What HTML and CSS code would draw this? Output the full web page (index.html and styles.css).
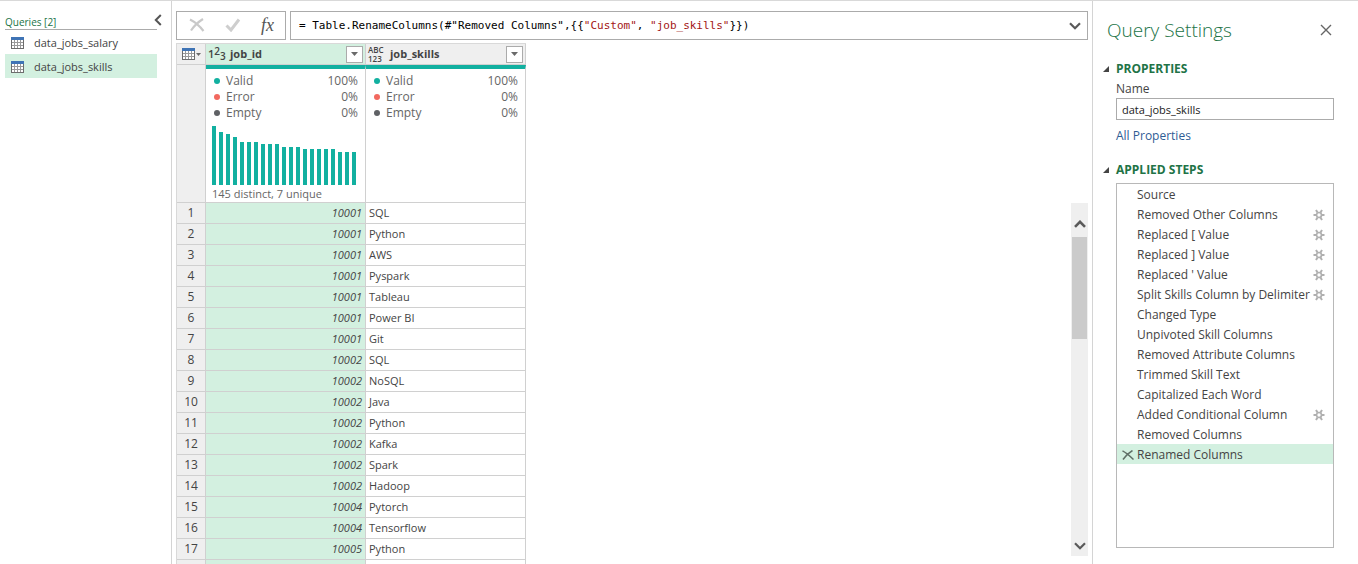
FILE: index.html
```html
<!DOCTYPE html>
<html lang="en">
<head>
<meta charset="utf-8">
<title>Power Query Editor</title>
<link rel="stylesheet" href="styles.css">
</head>
<body>
<svg class="defs" aria-hidden="true">
  <symbol id="table" viewBox="0 0 13 12">
    <rect x="0.5" y="0.5" width="12" height="11" fill="#fff" stroke="#6d6d6d"/>
    <path d="M3.5 3v8M6.5 3v8M9.5 3v8M1 5.5h11M1 8.5h11" stroke="#9a9a9a" fill="none"/>
    <rect width="13" height="3" fill="#3f74b5"/>
  </symbol>
  <symbol id="gear" viewBox="0 0 12 12">
    <g fill="none" stroke="#b0b0b0"><circle cx="6" cy="6" r="2.5" stroke-width="1.7"/>
    <path d="M0.500 6h2.500M9 6h2.500M3 1l1.500 2.500M9 1L7.500 3.500M3 11l1.500-2.500M9 11L7.500 8.500" stroke-width="2"/></g>
  </symbol>
  <symbol id="down" viewBox="0 0 12 8"><path d="M1 1.2l5 5 5-5" fill="none" stroke="#5a5a5a" stroke-width="2.2"/></symbol>
  <symbol id="up" viewBox="0 0 12 8"><path d="M1 6.8l5-5 5 5" fill="none" stroke="#5a5a5a" stroke-width="2.6"/></symbol>
  <symbol id="caret" viewBox="0 0 7 4"><path d="M0 0h7L3.5 4z" fill="#6a6a6a"/></symbol>
  <symbol id="fold" viewBox="0 0 6 6"><path d="M6 0v6H0z" fill="#444"/></symbol>
</svg>
<div class="app">
  <nav class="queries">
    <button class="collapse" aria-label="Collapse queries"><svg width="8" height="12" viewBox="0 0 8 12"><path d="M6.8 1L1.8 6l5 5" fill="none" stroke="#555" stroke-width="2"/></svg></button>
    <h2 class="queries-title">Queries [2]</h2>
    <ul class="query-list">
      <li><button class="query"><svg width="13" height="12"><use href="#table"/></svg>data_jobs_salary</button></li>
      <li><button class="query selected"><svg width="13" height="12"><use href="#table"/></svg>data_jobs_skills</button></li>
    </ul>
  </nav>

  <main class="editor">
    <div class="formula-bar">
      <div class="formula-actions">
        <button aria-label="Cancel"><svg width="16" height="14" viewBox="0 0 16 14"><path d="M1 1.5C5 3.500 11 8.500 14.500 13M14 1C10 3.500 5 8 2 12.500" fill="none" stroke="#c9c9c9" stroke-width="2.2"/></svg></button>
        <button aria-label="Commit"><svg width="16" height="14" viewBox="0 0 16 14"><path d="M1.500 7.500l4.500 4.500L14 1.500" fill="none" stroke="#cecece" stroke-width="3"/></svg></button>
        <button class="fx" aria-label="Insert step">fx</button>
      </div>
      <div class="formula">
        <code>= Table.RenameColumns(#"Removed Columns",{{<span class="str">"Custom"</span>, <span class="str">"job_skills"</span>}})</code>
        <button aria-label="Expand formula bar"><svg width="12" height="8"><use href="#down"/></svg></button>
      </div>
    </div>
    <div class="data">
      <table class="grid">
        <colgroup><col class="c-num"><col class="c-col"><col class="c-col"></colgroup>
        <thead>
          <tr class="names">
            <th><button class="corner" aria-label="Table menu"><svg width="13" height="12"><use href="#table"/></svg><svg width="5" height="3" viewBox="0 0 7 4"><use href="#caret"/></svg></button></th>
            <th class="active"><div class="head"><span class="type-int">1<sup>2</sup><sub>3</sub></span><span class="name">job_id</span><button class="filter" aria-label="Filter job_id"><svg width="7" height="4"><use href="#caret"/></svg></button></div></th>
            <th><div class="head"><span class="type-any"><span>ABC</span><span>123</span></span><span class="name">job_skills</span><button class="filter" aria-label="Filter job_skills"><svg width="7" height="4"><use href="#caret"/></svg></button></div></th>
          </tr>
          <tr class="profiles">
            <td class="blank"></td>
            <td class="profile">
              <ul class="quality"><li class="valid">Valid<span>100%</span></li><li class="error">Error<span>0%</span></li><li class="empty">Empty<span>0%</span></li></ul>
              <div class="bars">
                <i style="height:59px"></i><i style="height:53px"></i><i style="height:51px"></i><i style="height:48px"></i><i style="height:43px"></i><i style="height:43px"></i><i style="height:43px"></i><i style="height:41px"></i><i style="height:41px"></i><i style="height:41px"></i><i style="height:38px"></i><i style="height:38px"></i><i style="height:38px"></i><i style="height:36px"></i><i style="height:36px"></i><i style="height:36px"></i><i style="height:36px"></i><i style="height:36px"></i><i style="height:33px"></i><i style="height:33px"></i><i style="height:33px"></i>
              </div>
              <p class="distinct">145 distinct, 7 unique</p>
            </td>
            <td class="profile">
              <ul class="quality"><li class="valid">Valid<span>100%</span></li><li class="error">Error<span>0%</span></li><li class="empty">Empty<span>0%</span></li></ul>
            </td>
          </tr>
        </thead>
        <tbody>
          <tr><th>1</th><td class="id">10001</td><td>SQL</td></tr>
          <tr><th>2</th><td class="id">10001</td><td>Python</td></tr>
          <tr><th>3</th><td class="id">10001</td><td>AWS</td></tr>
          <tr><th>4</th><td class="id">10001</td><td>Pyspark</td></tr>
          <tr><th>5</th><td class="id">10001</td><td>Tableau</td></tr>
          <tr><th>6</th><td class="id">10001</td><td>Power BI</td></tr>
          <tr><th>7</th><td class="id">10001</td><td>Git</td></tr>
          <tr><th>8</th><td class="id">10002</td><td>SQL</td></tr>
          <tr><th>9</th><td class="id">10002</td><td>NoSQL</td></tr>
          <tr><th>10</th><td class="id">10002</td><td>Java</td></tr>
          <tr><th>11</th><td class="id">10002</td><td>Python</td></tr>
          <tr><th>12</th><td class="id">10002</td><td>Kafka</td></tr>
          <tr><th>13</th><td class="id">10002</td><td>Spark</td></tr>
          <tr><th>14</th><td class="id">10002</td><td>Hadoop</td></tr>
          <tr><th>15</th><td class="id">10004</td><td>Pytorch</td></tr>
          <tr><th>16</th><td class="id">10004</td><td>Tensorflow</td></tr>
          <tr><th>17</th><td class="id">10005</td><td>Python</td></tr>
          <tr><th></th><td class="id"></td><td></td></tr>
        </tbody>
      </table>
      <div class="scrollbar">
        <button aria-label="Scroll up"><svg width="12" height="8"><use href="#up"/></svg></button>
        <div class="track"><div class="thumb"></div></div>
        <button aria-label="Scroll down"><svg width="12" height="8"><use href="#down"/></svg></button>
      </div>
    </div>
  </main>

  <aside class="settings">
    <header class="settings-head">
      <h1>Query Settings</h1>
      <button aria-label="Close"><svg width="12" height="12" viewBox="0 0 12 12"><path d="M1 1l10 10M11 1L1 11" fill="none" stroke="#666" stroke-width="1.4"/></svg></button>
    </header>
    <h2 class="section"><svg width="6" height="6"><use href="#fold"/></svg>PROPERTIES</h2>
    <div class="properties">
      <label for="name">Name</label>
      <input id="name" type="text" value="data_jobs_skills">
      <a href="#">All Properties</a>
    </div>
    <h2 class="section"><svg width="6" height="6"><use href="#fold"/></svg>APPLIED STEPS</h2>
    <ol class="steps">
      <li>Source</li>
      <li>Removed Other Columns<button aria-label="Edit step"><svg width="12" height="12"><use href="#gear"/></svg></button></li>
      <li>Replaced [ Value<button aria-label="Edit step"><svg width="12" height="12"><use href="#gear"/></svg></button></li>
      <li>Replaced ] Value<button aria-label="Edit step"><svg width="12" height="12"><use href="#gear"/></svg></button></li>
      <li>Replaced ' Value<button aria-label="Edit step"><svg width="12" height="12"><use href="#gear"/></svg></button></li>
      <li>Split Skills Column by Delimiter<button aria-label="Edit step"><svg width="12" height="12"><use href="#gear"/></svg></button></li>
      <li>Changed Type</li>
      <li>Unpivoted Skill Columns</li>
      <li>Removed Attribute Columns</li>
      <li>Trimmed Skill Text</li>
      <li>Capitalized Each Word</li>
      <li>Added Conditional Column<button aria-label="Edit step"><svg width="12" height="12"><use href="#gear"/></svg></button></li>
      <li>Removed Columns</li>
      <li class="current"><button class="delete" aria-label="Delete step"><svg width="12" height="10" viewBox="0 0 12 10"><path d="M.5 .8C4 2.500 8 6 11.500 9.500M10.500 .5C7 2.500 3.500 6 1 9.500" fill="none" stroke="#5f6f66" stroke-width="1.500"/></svg></button>Renamed Columns</li>
    </ol>
  </aside>
</div>
</body>
</html>
```
FILE: styles.css
```css
* { box-sizing: border-box; }
body { margin: 0; background: #fff; color: #444; font: 12px/16px "Open Sans", "Noto Sans", sans-serif; }
h1, h2, ul, ol, p { margin: 0; padding: 0; font-weight: 400; list-style: none; }
button { display: flex; align-items: center; justify-content: center; margin: 0; padding: 0; border: 0; background: none; color: inherit; font: inherit; }
svg { display: block; flex: none; }
.defs { position: absolute; width: 0; height: 0; }

.app { display: grid; grid-template-columns: 172px 1fr 266px; height: 100vh; overflow: hidden; border-top: 1px solid #d9d9d9; }

.queries { position: relative; padding: 12px 14px 0 5px; border-right: 1px solid #d4d4d4; }
.collapse { position: absolute; top: 13px; right: 9px; }
.queries-title { height: 17px; border-bottom: 1px solid #ababab; color: #217346; font-size: 10px; font-weight: 400; line-height: 18px; }
.query { justify-content: flex-start; gap: 10px; width: 100%; height: 24px; padding: 1px 0 0 6px; font-size: 11px; }
.selected { background: #d3f0e0; }

.editor { display: flex; flex-direction: column; gap: 3px; min-width: 0; min-height: 0; padding: 10px 4px 0; }
.formula-bar { display: flex; flex: none; gap: 4px; height: 29px; }
.formula-actions, .formula { display: flex; align-items: center; border: 1px solid #ababab; }
.formula-actions { justify-content: space-between; width: 110px; padding: 0 11px 2px 12px; }
.fx { color: #555; font: italic 18px/20px "Liberation Serif", serif; }
.formula { flex: 1; justify-content: space-between; padding: 0 6px 0 8px; }
.formula code { color: #000; font: 11px/16px "DejaVu Sans Mono", monospace; white-space: pre; }
.formula .str { color: #a31515; }

.data { display: flex; flex: 1; align-items: flex-start; justify-content: space-between; min-height: 0; overflow: hidden; }
.grid { width: 350px; table-layout: fixed; border-collapse: separate; border-spacing: 0; border-top: 1px solid #d9d9d9; border-left: 1px solid #d9d9d9; }
.c-num { width: 29px; }
.c-col { width: 160px; }
.grid th, .grid td { height: 21px; padding: 0 3px; border-right: 1px solid #d0d0d0; border-bottom: 1px solid #d0d0d0; text-align: left; font-size: 11px; line-height: 16px; white-space: nowrap; }
.grid th { padding: 0; background: #efefef; font-weight: 400; }
.grid tbody th { font-size: 12px; text-align: center; }
.grid .id { background: #d3f0e0; font-style: italic; text-align: right; }
.corner { gap: 1px; width: 100%; height: 20px; }
.names .active { background: #d3f0e0; }
.head { display: flex; align-items: center; height: 20px; padding: 0 2px; }
.name { flex: 1; font-weight: 700; }
.type-int { width: 22px; font-size: 11px; font-weight: 600; }
.type-int sup, .type-int sub { font-size: 10px; line-height: 0; }
.type-int sup { vertical-align: 3px; }
.type-int sub { vertical-align: -2px; }
.type-any { display: flex; flex-direction: column; width: 22px; font-size: 8px; font-weight: 600; line-height: 9px; }
.filter { width: 17px; height: 17px; border: 1px solid #ababab; background: #fff; }
.grid .blank { background: #efefef; }
.grid .profile { height: 138px; padding: 4px 7px 0 6px; border-top: 4px solid #12b0a0; vertical-align: top; color: #666; }
.quality { font-size: 12px; }
.quality li { display: flex; align-items: center; gap: 6px; height: 16px; padding-left: 2px; }
.quality li::before { content: ""; width: 6px; height: 6px; border-radius: 50%; background: #12b0a0; }
.quality .error::before { background: #f2695f; }
.quality .empty::before { background: #5f6165; }
.quality span { margin-left: auto; }
.bars { display: flex; align-items: flex-end; gap: 3px; height: 64px; }
.bars i { flex: none; width: 4px; background: #12b0a0; }
.distinct { line-height: 17px; }

.scrollbar { display: flex; flex-direction: column; align-self: stretch; width: 17px; margin: 160px 0 8px; background: #efefef; }
.scrollbar button { height: 34px; padding-top: 8px; }
.scrollbar button:last-child { height: 20px; padding: 0; }
.track { flex: 1; padding: 0 1px; }
.thumb { height: 102px; background: #cbcbcb; }

.settings { display: flex; flex-direction: column; padding: 15px 24px 16px 10px; border-left: 1px solid #d4d4d4; min-height: 0; }
.settings-head { display: flex; align-items: center; justify-content: space-between; height: 28px; padding: 0 2px 0 4px; }
.settings-head h1 { color: #217346; font-size: 19px; font-weight: 300; line-height: 28px; }
.section { display: flex; align-items: center; gap: 7px; color: #217346; font-size: 12px; font-weight: 700; line-height: 16px; }
.settings-head + .section { margin-top: 17px; }
.properties { display: flex; flex-direction: column; margin: 4px 0 18px 13px; }
.properties input { height: 22px; margin: 1px 0 8px; padding: 0 5px; border: 1px solid #ababab; color: #222; font: inherit; font-size: 11px; width: 100%; }
.properties a { color: #2f5c95; text-decoration: none; }
.steps { flex: 1; margin: 5px 0 0 13px; border: 1px solid #b8b8b8; overflow: hidden; }
.steps li { display: flex; align-items: center; justify-content: space-between; height: 20px; padding: 1px 8px 0 20px; }
.steps .current { justify-content: flex-start; gap: 3px; padding-left: 5px; background: #d3f0e0; }
```
